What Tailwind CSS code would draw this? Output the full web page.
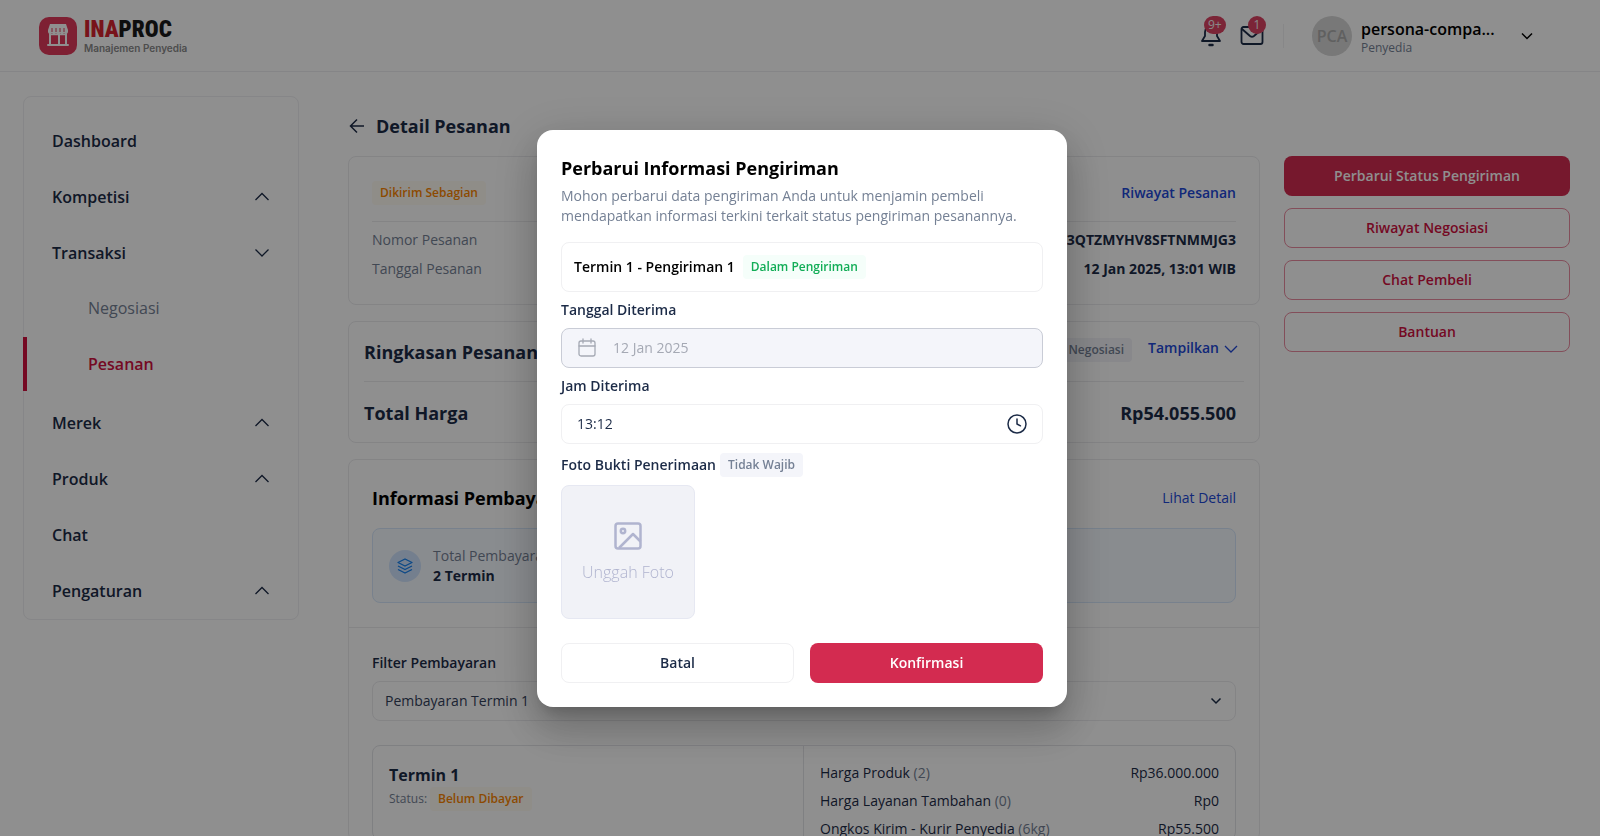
<!DOCTYPE html>
<html lang="id">
<head>
  <meta charset="UTF-8" />
  <meta name="viewport" content="width=device-width, initial-scale=1.0" />
  <title>Detail Pesanan - INAPROC</title>
  <script src="https://cdn.jsdelivr.net/npm/@tailwindcss/browser@4"></script>
</head>
<body class="h-screen overflow-hidden bg-white font-['Open_Sans',sans-serif] text-sm text-[#1c2b47]">

  <!-- Header -->
  <header class="flex h-[72px] items-center justify-between border-b border-[#eeeef0] pl-[39px] pr-[67px]">
    <a href="#" class="flex items-center gap-[7px]">
      <svg class="size-[38px]" viewBox="0 0 38 38" fill="none">
        <rect width="38" height="38" rx="10" fill="#e03a5b" />
        <path d="M11 7h16l2 6v2a2.3 2.3 0 0 1-4 1.2 2.5 2.5 0 0 1-4 0 2.5 2.5 0 0 1-4 0 2.5 2.5 0 0 1-4 0A2.3 2.3 0 0 1 9 15v-2z" fill="#fff" />
        <path d="M13 11v4M17 11v4M21 11v4M25 11v4" stroke="#e03a5b" />
        <path d="M11 17v10M27 17v10M20 17v10M9 28h20" stroke="#fff" stroke-width="2" stroke-linecap="round" />
        <path d="M11 17.500h16" stroke="#fff" stroke-width="1.500" />
      </svg>
      <span class="flex flex-col">
        <span class="font-['Roboto_Condensed',sans-serif] text-[23px] leading-6 font-black text-[#1a1a1a]"><span class="text-[#d6222f]">INA</span>PROC</span>
        <span class="font-['Inter',sans-serif] text-[10px] leading-3 font-semibold text-[#8a8a8a]">Manajemen Penyedia</span>
      </span>
    </a>
    <div class="flex items-center">
      <button class="relative mr-[17px]" aria-label="Notifikasi">
        <svg class="size-6" viewBox="0 0 24 24" fill="none" stroke="#1c2b47" stroke-width="1.800" stroke-linecap="round" stroke-linejoin="round">
          <path d="M6 8a6 6 0 0 1 12 0v4l3 5H3l3-5z" /><path d="M10.500 21h3" stroke-width="2.500" />
        </svg>
        <span class="absolute -top-2 left-[5px] rounded-full bg-[#dc4363] px-1 text-xs leading-[18px] text-[#f3f3f3]">9+</span>
      </button>
      <button class="relative" aria-label="Pesan">
        <svg class="size-6" viewBox="0 0 24 24" fill="none" stroke="#1c2b47" stroke-width="1.800" stroke-linecap="round" stroke-linejoin="round">
          <rect x="1.500" y="3" width="21" height="17" rx="2" /><path d="m2 5 8 7q2 1.500 4 0l8-7" />
        </svg>
        <span class="absolute -top-2 left-2 w-[18px] rounded-full bg-[#dc4363] text-center text-xs leading-[18px] text-[#f3f3f3]">1</span>
      </button>
      <span class="mr-7 ml-[19px] h-6 w-px bg-[#f0f0f2]"></span>
      <span class="mr-[9px] flex size-10 items-center justify-center rounded-full bg-[#d6d6d6] text-base font-semibold text-[#acacac]">PCA</span>
      <span class="mr-[26px] flex w-[134px] flex-col pt-1">
        <span class="text-base leading-5 font-semibold text-black">persona-compa...</span>
        <span class="text-xs leading-[18px] text-[#758195]">Penyedia</span>
      </span>
      <button aria-label="Menu akun">
        <svg class="size-3" viewBox="0 0 12 12" fill="none" stroke="#000" stroke-width="1.500"><path d="m1 3.500 5 5 5-5" /></svg>
      </button>
    </div>
  </header>

  <div class="flex items-start pt-6 pr-[30px] pl-[23px]">
    <!-- Sidebar -->
    <nav class="w-[276px] shrink-0 rounded-lg border border-[#efeff2] pt-4 text-base font-semibold">
      <a href="#" class="flex h-14 items-center px-7">Dashboard</a>
      <button class="flex h-14 w-full items-center justify-between px-7">Kompetisi
        <svg class="size-4" viewBox="0 0 16 16" fill="none" stroke="currentColor" stroke-width="1.300"><path d="m1.500 11 6.500-6.500 6.500 6.500" /></svg>
      </button>
      <button class="flex h-14 w-full items-center justify-between px-7">Transaksi
        <svg class="size-4" viewBox="0 0 16 16" fill="none" stroke="currentColor" stroke-width="1.300"><path d="m1.500 4.500 6.500 6.500 6.500-6.500" /></svg>
      </button>
      <div class="flex flex-col gap-0.5 pb-1">
        <a href="#" class="flex h-[54px] items-center pl-16 font-normal text-[#758195]">Negosiasi</a>
        <a href="#" class="-ml-px flex h-[54px] items-center border-l-4 border-[#d0103f] pl-[61px] text-[#d0103f]">Pesanan</a>
      </div>
      <button class="flex h-14 w-full items-center justify-between px-7">Merek
        <svg class="size-4" viewBox="0 0 16 16" fill="none" stroke="currentColor" stroke-width="1.300"><path d="m1.500 11 6.500-6.500 6.500 6.500" /></svg>
      </button>
      <button class="flex h-14 w-full items-center justify-between px-7">Produk
        <svg class="size-4" viewBox="0 0 16 16" fill="none" stroke="currentColor" stroke-width="1.300"><path d="m1.500 11 6.500-6.500 6.500 6.500" /></svg>
      </button>
      <a href="#" class="flex h-14 items-center px-7">Chat</a>
      <button class="flex h-14 w-full items-center justify-between px-7">Pengaturan
        <svg class="size-4" viewBox="0 0 16 16" fill="none" stroke="currentColor" stroke-width="1.300"><path d="m1.500 11 6.500-6.500 6.500 6.500" /></svg>
      </button>
    </nav>

    <!-- Order detail -->
    <main class="ml-[49px] min-w-0 flex-1">
      <div class="flex h-[60px] items-center gap-3">
        <a href="#" aria-label="Kembali">
          <svg class="size-4" viewBox="0 0 16 16" fill="none" stroke="currentColor" stroke-width="1.500"><path d="M16 8H3M9 1.500 2.500 8 9 14.500" /></svg>
        </a>
        <h1 class="text-lg font-bold">Detail Pesanan</h1>
      </div>

      <section class="h-[149px] rounded-lg border border-[#ebebee] px-[23px] pt-6">
        <div class="flex items-center justify-between border-b border-[#ebebee] pb-4">
          <span class="rounded bg-[#fffbf3] px-2 text-xs leading-6 font-semibold text-[#fa8500]">Dikirim Sebagian</span>
          <a href="#" class="font-semibold text-[#2148d8]">Riwayat Pesanan</a>
        </div>
        <dl class="flex flex-col gap-[9px] pt-2">
          <div class="flex justify-between"><dt class="text-[#758195]">Nomor Pesanan</dt><dd class="font-bold">3QTZMYHV8SFTNMMJG3</dd></div>
          <div class="flex justify-between"><dt class="text-[#758195]">Tanggal Pesanan</dt><dd class="font-bold">12 Jan 2025, 13:01 WIB</dd></div>
        </dl>
      </section>

      <section class="mt-4 h-[122px] rounded-lg border border-[#ebebee] px-[15px] text-lg font-bold">
        <div class="flex h-[60px] items-center justify-between border-b border-[#ebebee] pr-[5px]">
          <h2>Ringkasan Pesanan</h2>
          <div class="flex items-center gap-4 pb-1">
            <span class="rounded bg-[#f2f3f8] px-2 text-xs leading-6 font-semibold text-[#758195]">Negosiasi</span>
            <button class="flex items-center gap-1 pb-1 text-sm font-semibold text-[#2148d8]">Tampilkan
              <svg class="size-4" viewBox="0 0 16 16" fill="none" stroke="currentColor" stroke-width="1.300"><path d="m2 6 6 6 6-6" /></svg>
            </button>
          </div>
        </div>
        <div class="flex h-[62px] items-center justify-between pr-2"><span>Total Harga</span><span>Rp54.055.500</span></div>
      </section>

      <section class="mt-4 rounded-lg border border-[#ebebee]">
        <div class="border-b border-[#ebebee] px-[23px] pt-6 pb-6">
          <div class="flex items-center justify-between">
            <h2 class="text-lg font-bold text-black">Informasi Pembayaran</h2>
            <a href="#" class="text-[#2148d8]">Lihat Detail</a>
          </div>
          <div class="mt-4 flex h-[75px] items-center gap-3 rounded-lg border border-[#d6e7fb] bg-[#f5f9ff] px-4">
            <span class="flex size-8 items-center justify-center rounded-full bg-[#cfe3fd]">
              <svg class="size-4" viewBox="0 0 16 16" fill="none" stroke="#1480f0" stroke-width="1.300" stroke-linejoin="round"><path d="m8 1 7 3.500L8 8 1 4.500zM1 8l7 3.500L15 8M1 11.500 8 15l7-3.500" /></svg>
            </span>
            <div>
              <p class="text-[#758195]">Total Pembayaran</p>
              <p class="font-bold">2 Termin</p>
            </div>
          </div>
        </div>
        <div class="px-[23px] pt-[25px]">
          <label for="filter" class="block font-semibold">Filter Pembayaran</label>
          <div class="relative mt-2">
            <select id="filter" class="h-10 w-full appearance-none rounded-lg border border-[#ebebee] px-3 text-[#33405a]"><option>Pembayaran Termin 1</option></select>
            <svg class="pointer-events-none absolute top-[14px] right-[14px] size-3" viewBox="0 0 12 12" fill="none" stroke="currentColor" stroke-width="1.500"><path d="m1.500 3.500 4.500 4.500 4.500-4.500" /></svg>
          </div>
          <div class="mt-6 grid grid-cols-2 rounded-lg border border-[#e3e4e8]">
            <div class="border-r border-[#e3e4e8] px-4 pt-[17px]">
              <h3 class="text-base font-bold">Termin 1</h3>
              <p class="flex items-center gap-[3px] text-xs text-[#758195]">Status: <span class="rounded bg-[#fffbf3] px-2 leading-6 font-semibold text-[#fa8500]">Belum Dibayar</span></p>
            </div>
            <dl class="flex flex-col gap-2 px-4 pt-[17px]">
              <div class="flex justify-between"><dt>Harga Produk <span class="text-[#758195]">(2)</span></dt><dd>Rp36.000.000</dd></div>
              <div class="flex justify-between"><dt>Harga Layanan Tambahan <span class="text-[#758195]">(0)</span></dt><dd>Rp0</dd></div>
              <div class="flex justify-between"><dt>Ongkos Kirim - Kurir Penyedia <span class="text-[#758195]">(6kg)</span></dt><dd>Rp55.500</dd></div>
            </dl>
          </div>
        </div>
      </section>
    </main>

    <!-- Actions -->
    <aside class="mt-[60px] ml-6 flex w-[286px] shrink-0 flex-col gap-3 font-semibold">
      <button class="h-10 rounded-lg bg-[#d32b50] text-white">Perbarui Status Pengiriman</button>
      <button class="h-10 rounded-lg border border-[#ea8ba0] text-[#d0103f]">Riwayat Negosiasi</button>
      <button class="h-10 rounded-lg border border-[#ea8ba0] text-[#d0103f]">Chat Pembeli</button>
      <button class="h-10 rounded-lg border border-[#ea8ba0] text-[#d0103f]">Bantuan</button>
    </aside>
  </div>

  <!-- Dialog -->
  <div class="fixed inset-0 flex items-center justify-center bg-black/44 pl-1">
    <div role="dialog" aria-labelledby="dialog-title" class="w-[530px] rounded-2xl bg-white p-6 shadow-[0_11px_15px_-7px_rgba(0,0,0,0.2),0_24px_38px_3px_rgba(0,0,0,0.14),0_9px_46px_8px_rgba(0,0,0,0.12)]">
      <h2 id="dialog-title" class="text-lg font-bold text-black">Perbarui Informasi Pengiriman</h2>
      <p class="mt-1 text-[#758195]">Mohon perbarui data pengiriman Anda untuk menjamin pembeli mendapatkan informasi terkini terkait status pengiriman pesanannya.</p>
      <div class="mt-4 flex h-[50px] items-center gap-2 rounded-lg border border-[#f0f0f2] px-3">
        <span class="font-semibold text-black">Termin 1 - Pengiriman 1</span>
        <span class="rounded bg-[#f5fefa] px-2 text-xs leading-6 font-semibold text-[#12ad57]">Dalam Pengiriman</span>
      </div>
      <label for="tanggal" class="mt-2 block font-semibold">Tanggal Diterima</label>
      <div class="relative mt-2">
        <svg class="absolute top-[10px] left-4 size-5" viewBox="0 0 20 20" fill="none" stroke="#a5a9b4" stroke-width="1.300" stroke-linecap="round"><rect x="2" y="3" width="16" height="15" rx="2" /><path d="M2 8h16M6 1v4M14 1v4" /></svg>
        <input id="tanggal" type="text" value="12 Jan 2025" disabled class="h-10 w-full rounded-lg border border-[#c9ccd6] bg-[#f4f5fa] pl-[51px] text-[#a5a9b4]" />
      </div>
      <label for="jam" class="mt-2 block font-semibold">Jam Diterima</label>
      <div class="relative mt-2">
        <input id="jam" type="text" value="13:12" class="h-10 w-full rounded-lg border border-[#f0f0f2] px-[15px]" />
        <svg class="absolute top-[10px] right-4 size-5" viewBox="0 0 20 20" fill="none" stroke="currentColor" stroke-width="1.500" stroke-linecap="round" stroke-linejoin="round"><circle cx="10" cy="10" r="9" /><path d="M10 5v5l3.500 1.800" /></svg>
      </div>
      <div class="mt-[9px] flex items-center gap-1">
        <span class="font-semibold">Foto Bukti Penerimaan</span>
        <span class="rounded bg-[#f4f5fa] px-2 text-xs leading-6 font-semibold text-[#758195]">Tidak Wajib</span>
      </div>
      <button class="mt-2 flex size-[134px] flex-col items-center justify-center gap-2 rounded-lg border border-[#e6e8f2] bg-[#f1f2f7] text-base font-light text-[#b0b4cf]">
        <svg class="size-8" viewBox="0 0 32 32" fill="none" stroke="currentColor" stroke-width="2.500" stroke-linejoin="round"><rect x="3.500" y="3.500" width="25" height="25" rx="2.500" /><circle cx="11" cy="11" r="2.200" /><path d="m7 28 14-14 7.500 7.500" /></svg>
        Unggah Foto
      </button>
      <div class="mt-6 grid grid-cols-2 gap-4 font-semibold">
        <button class="h-10 rounded-lg border border-[#f0f0f2]">Batal</button>
        <button class="h-10 rounded-lg bg-[#d32b50] text-white">Konfirmasi</button>
      </div>
    </div>
  </div>
</body>
</html>
